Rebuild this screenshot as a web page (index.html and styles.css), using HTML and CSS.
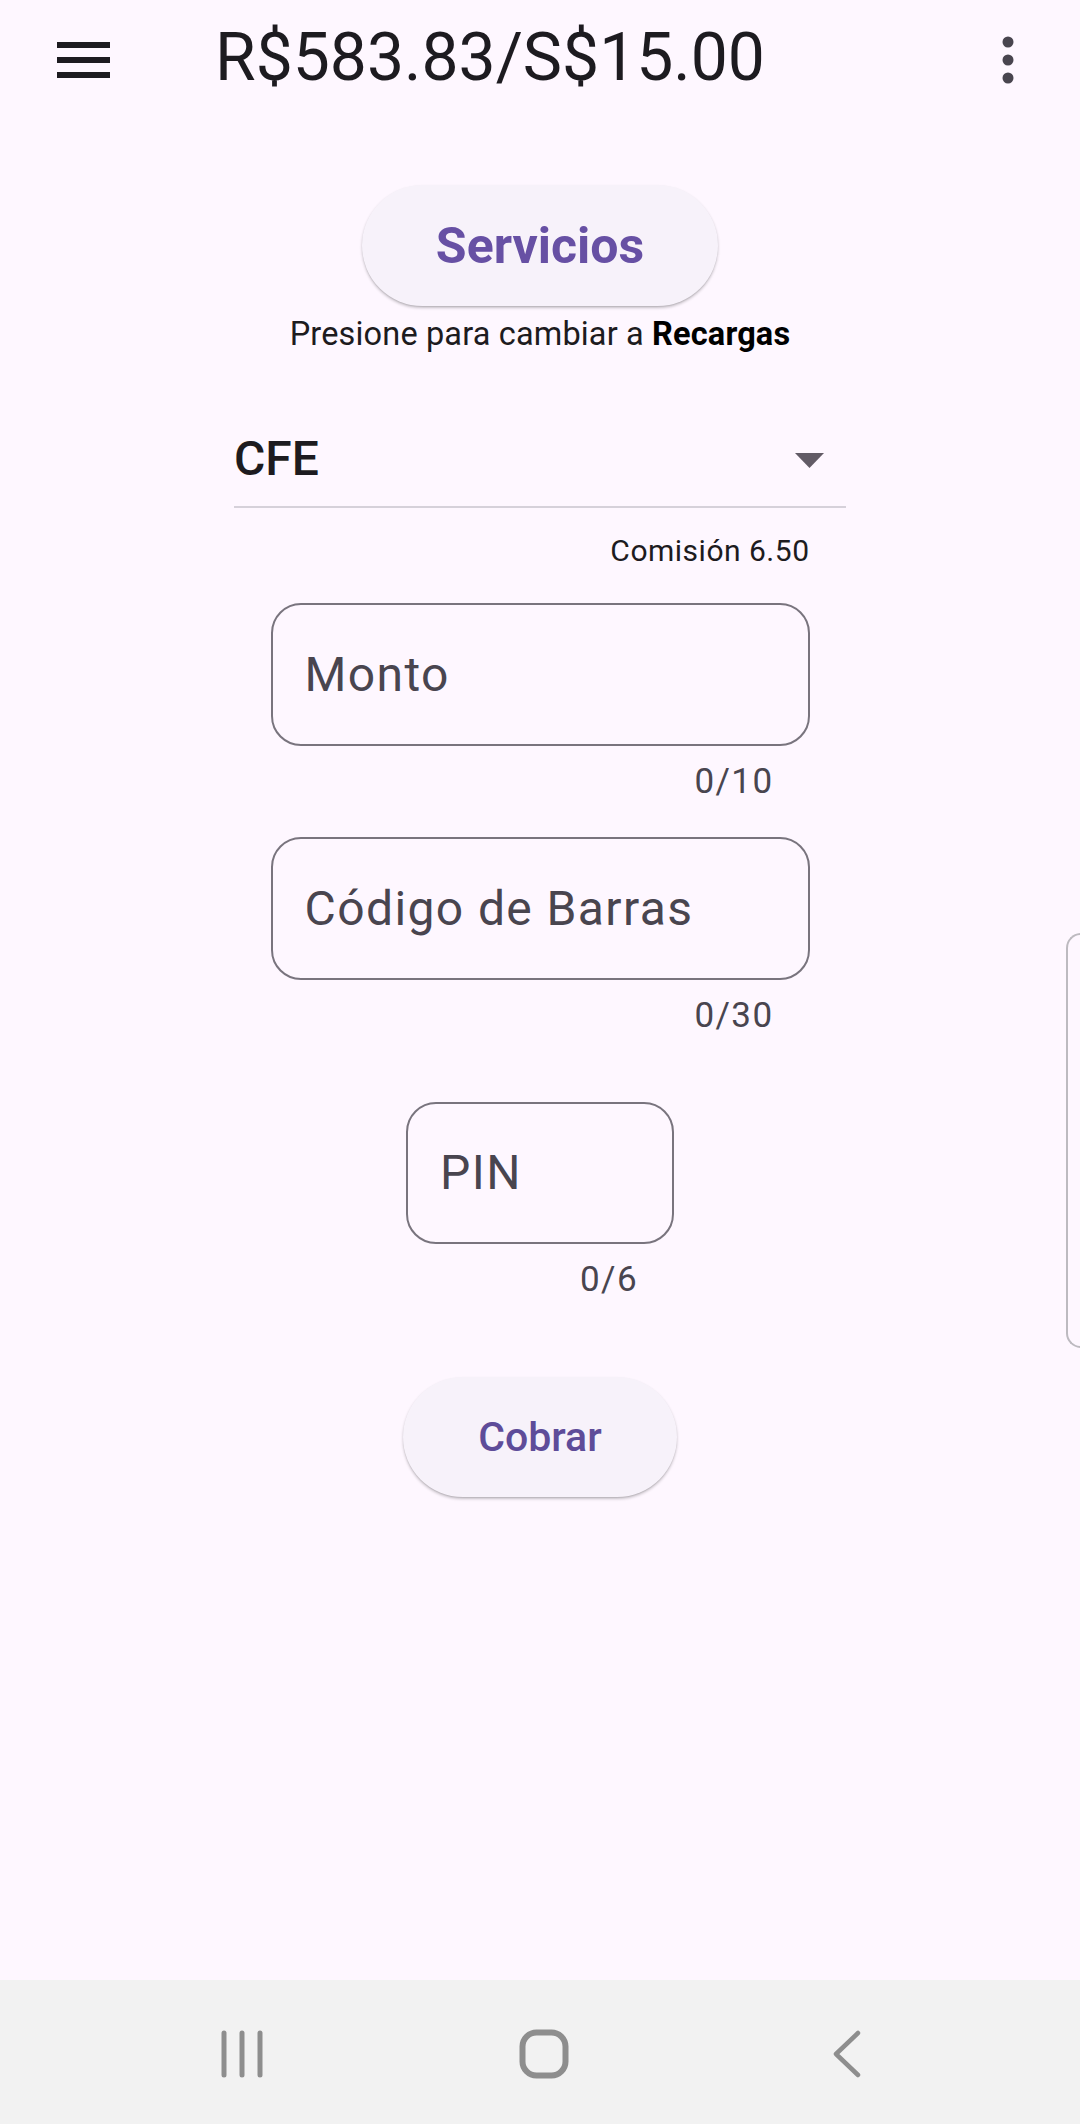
FILE: index.html
```html
<!DOCTYPE html>
<html lang="es">
<head>
<meta charset="utf-8">
<title>Servicios</title>
<link rel="stylesheet" href="styles.css">
</head>
<body>
<div class="screen">
  <header class="appbar">
    <span class="menu-btn">
      <svg width="53" height="36" viewBox="0 0 53 36"><rect x="0" y="0" width="53" height="6" fill="#1D1B20"/><rect x="0" y="15" width="53" height="6" fill="#1D1B20"/><rect x="0" y="30" width="53" height="6" fill="#1D1B20"/></svg>
    </span>
    <h1 class="title">R$583.83/S$15.00</h1>
    <span class="more-btn">
      <svg width="12" height="48" viewBox="0 0 12 48"><circle cx="6" cy="6" r="5.5" fill="#49454F"/><circle cx="6" cy="24" r="5.5" fill="#49454F"/><circle cx="6" cy="42" r="5.5" fill="#49454F"/></svg>
    </span>
  </header>

  <main class="content">
    <button class="pill pill-lg">Servicios</button>
    <p class="hint">Presione para cambiar a <b>Recargas</b></p>

    <div class="dropdown">
      <span class="dropdown-value">CFE</span>
      <svg class="dropdown-arrow" width="29" height="15" viewBox="0 0 29 15"><polygon points="0,0 29,0 14.5,15" fill="#625B66"/></svg>
    </div>

    <div class="fields">
      <div class="commission">Comisión 6.50</div>

      <div class="field">
        <div class="field-box">Monto</div>
        <div class="counter">0/10</div>
      </div>

      <div class="field field-gap">
        <div class="field-box">Código de Barras</div>
        <div class="counter">0/30</div>
      </div>
    </div>

    <div class="field field-pin">
      <div class="field-box">PIN</div>
      <div class="counter">0/6</div>
    </div>

    <button class="pill pill-sm">Cobrar</button>
  </main>

  <nav class="navbar">
    <svg class="nav-recents" width="44" height="48" viewBox="0 0 44 48"><g stroke="#8E8E8E" stroke-width="5" stroke-linecap="round"><line x1="4" y1="3" x2="4" y2="45"/><line x1="22" y1="3" x2="22" y2="45"/><line x1="40" y1="3" x2="40" y2="45"/></g></svg>
    <svg class="nav-home" width="50" height="50" viewBox="0 0 50 50"><rect x="3.5" y="3.5" width="43" height="43" rx="14" fill="none" stroke="#8E8E8E" stroke-width="6"/></svg>
    <svg class="nav-back" width="30" height="48" viewBox="0 0 30 48"><polyline points="26,3 4,24 26,45" fill="none" stroke="#8E8E8E" stroke-width="4.5" stroke-linecap="round" stroke-linejoin="round"/></svg>
  </nav>

  <div class="edge-handle"></div>
</div>
</body>
</html>
```

FILE: styles.css
```css
* { box-sizing: border-box; }

html, body {
  margin: 0;
  padding: 0;
}

body {
  background: #FEF7FF;
  font-family: Roboto, "Noto Sans", "Liberation Sans", sans-serif;
  color: #1D1B20;
}

.screen {
  position: relative;
  width: 1080px;
  height: 2124px;
  display: flex;
  flex-direction: column;
  overflow: hidden;
}

/* App bar */
.appbar {
  height: 120px;
  display: flex;
  align-items: center;
  padding-left: 57px;
  padding-right: 66px;
  flex-shrink: 0;
}

.menu-btn, .more-btn {
  display: flex;
  align-items: center;
}

.title {
  margin: 0 0 5px 105px;
  font-size: 66px;
  font-weight: 400;
  line-height: 78px;
  color: #1D1B20;
  white-space: nowrap;
}

.more-btn {
  margin-left: auto;
}

/* Content */
.content {
  flex: 1;
  display: flex;
  flex-direction: column;
  align-items: center;
  padding-top: 65px;
}

.pill {
  border: none;
  background: #F7F2FA;
  color: #6750A4;
  font-family: Roboto, "Noto Sans", sans-serif;
  box-shadow: 0 2px 3px rgba(0, 0, 0, 0.22), 0 1px 1px rgba(0, 0, 0, 0.08);
  padding: 0;
}

.pill-lg {
  width: 356px;
  height: 121px;
  border-radius: 61px;
  font-size: 50px;
  font-weight: 700;
}

.pill-sm {
  width: 274px;
  height: 120px;
  border-radius: 60px;
  font-size: 41px;
  font-weight: 500;
  margin-top: 77px;
  color: #5E4C99;
}

.hint {
  margin: 10px 0 0;
  font-size: 32.5px;
  line-height: 36px;
  letter-spacing: 0.15px;
  color: #1D1B20;
}

.hint b {
  font-weight: 700;
  color: #000;
}

.dropdown {
  margin-top: 80px;
  width: 612px;
  height: 76px;
  padding-bottom: 20px;
  display: flex;
  align-items: center;
  border-bottom: 2px solid #D6D1DA;
  padding-right: 22px;
}

.dropdown-value {
  font-size: 48px;
  font-weight: 500;
  line-height: 54px;
  color: #1D1B20;
}

.dropdown-arrow {
  margin-left: auto;
  margin-top: 2px;
}

.fields {
  width: 539px;
  display: flex;
  flex-direction: column;
}

.commission {
  margin-top: 26px;
  text-align: right;
  font-size: 30px;
  line-height: 34px;
  letter-spacing: 0.5px;
  color: #1D1B20;
}

.field {
  display: flex;
  flex-direction: column;
  margin-top: 35px;
}

.field-box {
  width: 539px;
  height: 143px;
  border: 2px solid #79747E;
  border-radius: 30px;
  display: flex;
  align-items: center;
  padding-left: 32px;
  font-size: 48px;
  line-height: 56px;
  letter-spacing: 1.4px;
  color: #49454F;
}

.counter {
  margin-top: 16px;
  text-align: right;
  padding-right: 36px;
  font-size: 35px;
  line-height: 40px;
  letter-spacing: 1.4px;
  color: #49454F;
}

.field-pin {
  margin-top: 66px;
}

.field-pin .field-box {
  width: 268px;
  height: 142px;
}

/* Nav bar */
.navbar {
  height: 144px;
  flex-shrink: 0;
  background: #F2F2F2;
  display: flex;
  align-items: center;
  padding-left: 220px;
  padding-top: 4px;
}

.nav-home {
  margin-left: 255px;
}

.nav-back {
  margin-left: 263px;
}

/* Edge panel handle (overlays the content at the right edge) */
.edge-handle {
  position: absolute;
  left: 1066px;
  top: 933px;
  width: 40px;
  height: 415px;
  border: 2px solid #BDBAC0;
  border-right: none;
  border-radius: 15px 0 0 15px;
}
```
